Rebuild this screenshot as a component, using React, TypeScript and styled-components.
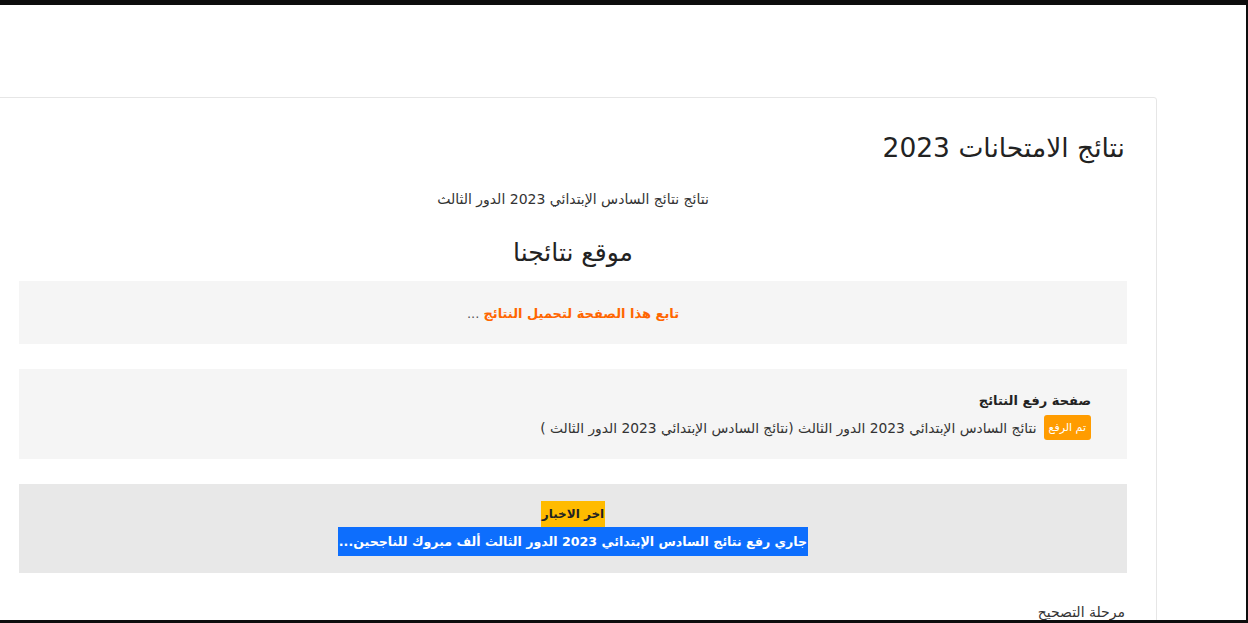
import React from 'react';
import styled, { createGlobalStyle } from 'styled-components';

const GlobalStyle = createGlobalStyle`
  html, body {
    margin: 0;
    padding: 0;
    background: #fff;
  }
  body {
    font-family: "DejaVu Sans", "Noto Sans", sans-serif;
    color: #222;
  }
  * {
    box-sizing: border-box;
  }
`;

const Frame = styled.div`
  height: 623px;
  overflow: hidden;
  border-top: 5px solid #0d0d0d;
  border-right: 2px solid #0d0d0d;
  border-bottom: 3px solid #0d0d0d;
  direction: rtl;
  padding-top: 92px;
`;

const Card = styled.div`
  width: 1168px;
  margin-right: 89px;
  border: 1px solid #e6e6e6;
  border-radius: 3px;
  background: #fff;
  padding: 30px 29px 40px 29px;
`;

const Title = styled.h1`
  margin: 0 0 20px;
  padding-right: 2px;
  font-size: 26.5px;
  font-weight: 400;
  line-height: 40px;
  color: #222;
`;

const Subtitle = styled.p`
  margin: 0 0 28px;
  text-align: center;
  font-size: 14px;
  line-height: 22px;
  color: #333;
`;

const SiteName = styled.h2`
  margin: 0 0 13px;
  text-align: center;
  font-size: 25px;
  font-weight: 400;
  line-height: 30px;
  color: #222;
`;

const Panel = styled.div<{ $tone?: 'light' | 'dark'; $center?: boolean }>`
  background: ${p => (p.$tone === 'dark' ? '#e8e8e8' : '#f5f5f5')};
  text-align: ${p => (p.$center ? 'center' : 'right')};
  margin-bottom: 25px;
`;

const NoticePanel = styled(Panel)`
  height: 63px;
  display: flex;
  align-items: center;
  justify-content: center;
  padding-top: 2px;
  font-size: 13px;
`;

const Orange = styled.strong`
  color: #ff6600;
  font-weight: 700;
`;

const Dots = styled.span`
  color: #555;
  margin-right: 4px;
`;

const UploadPanel = styled(Panel)`
  height: 90px;
  padding: 21px 36px 0;
`;

const UploadTitle = styled.div`
  font-size: 13px;
  font-weight: 700;
  line-height: 22px;
  color: #222;
  margin-bottom: 3px;
`;

const UploadRow = styled.div`
  display: flex;
  align-items: center;
  gap: 7px;
  font-size: 13.8px;
  color: #333;
`;

const Badge = styled.span`
  display: inline-flex;
  align-items: center;
  justify-content: center;
  height: 25px;
  padding: 0 5px;
  border-radius: 3px;
  background: #ff9c00;
  color: #fff;
  font-size: 11px;
`;

const NewsPanel = styled(Panel)`
  height: 89px;
  display: flex;
  flex-direction: column;
  align-items: center;
  padding-top: 17px;
`;

const NewsLabel = styled.span`
  display: inline-block;
  background: #ffbb00;
  color: #222;
  font-size: 12px;
  font-weight: 700;
  line-height: 26px;
  padding: 0 1px;
`;

const NewsLine = styled.span`
  display: inline-block;
  background: #0d6efd;
  color: #fff;
  font-size: 12.6px;
  font-weight: 700;
  line-height: 29px;
  padding: 0 1px;
`;

const Stage = styled.div`
  font-size: 14px;
  line-height: 24px;
  color: #333;
  margin-top: 27px;
  padding-right: 2px;
`;

export default function App() {
  return (
    <>
      <GlobalStyle />
      <Frame>
        <Card>
          <Title>نتائج الامتحانات 2023</Title>
          <Subtitle>نتائج نتائج السادس الإبتدائي 2023 الدور الثالث</Subtitle>
          <SiteName>موقع نتائجنا</SiteName>

          <NoticePanel $center>
            <Orange>تابع هذا الصفحة لتحميل النتائج</Orange>
            <Dots>...</Dots>
          </NoticePanel>

          <UploadPanel>
            <UploadTitle>صفحة رفع النتائج</UploadTitle>
            <UploadRow>
              <Badge>تم الرفع</Badge>
              <span>نتائج السادس الإبتدائي 2023 الدور الثالث (نتائج السادس الإبتدائي 2023 الدور الثالث )</span>
            </UploadRow>
          </UploadPanel>

          <NewsPanel $tone="dark" $center>
            <NewsLabel>اخر الاخبار</NewsLabel>
            <NewsLine>جاري رفع نتائج السادس الإبتدائي 2023 الدور الثالث ألف مبروك للناجحين...</NewsLine>
          </NewsPanel>

          <Stage>مرحلة التصحيح</Stage>
        </Card>
      </Frame>
    </>
  );
}
